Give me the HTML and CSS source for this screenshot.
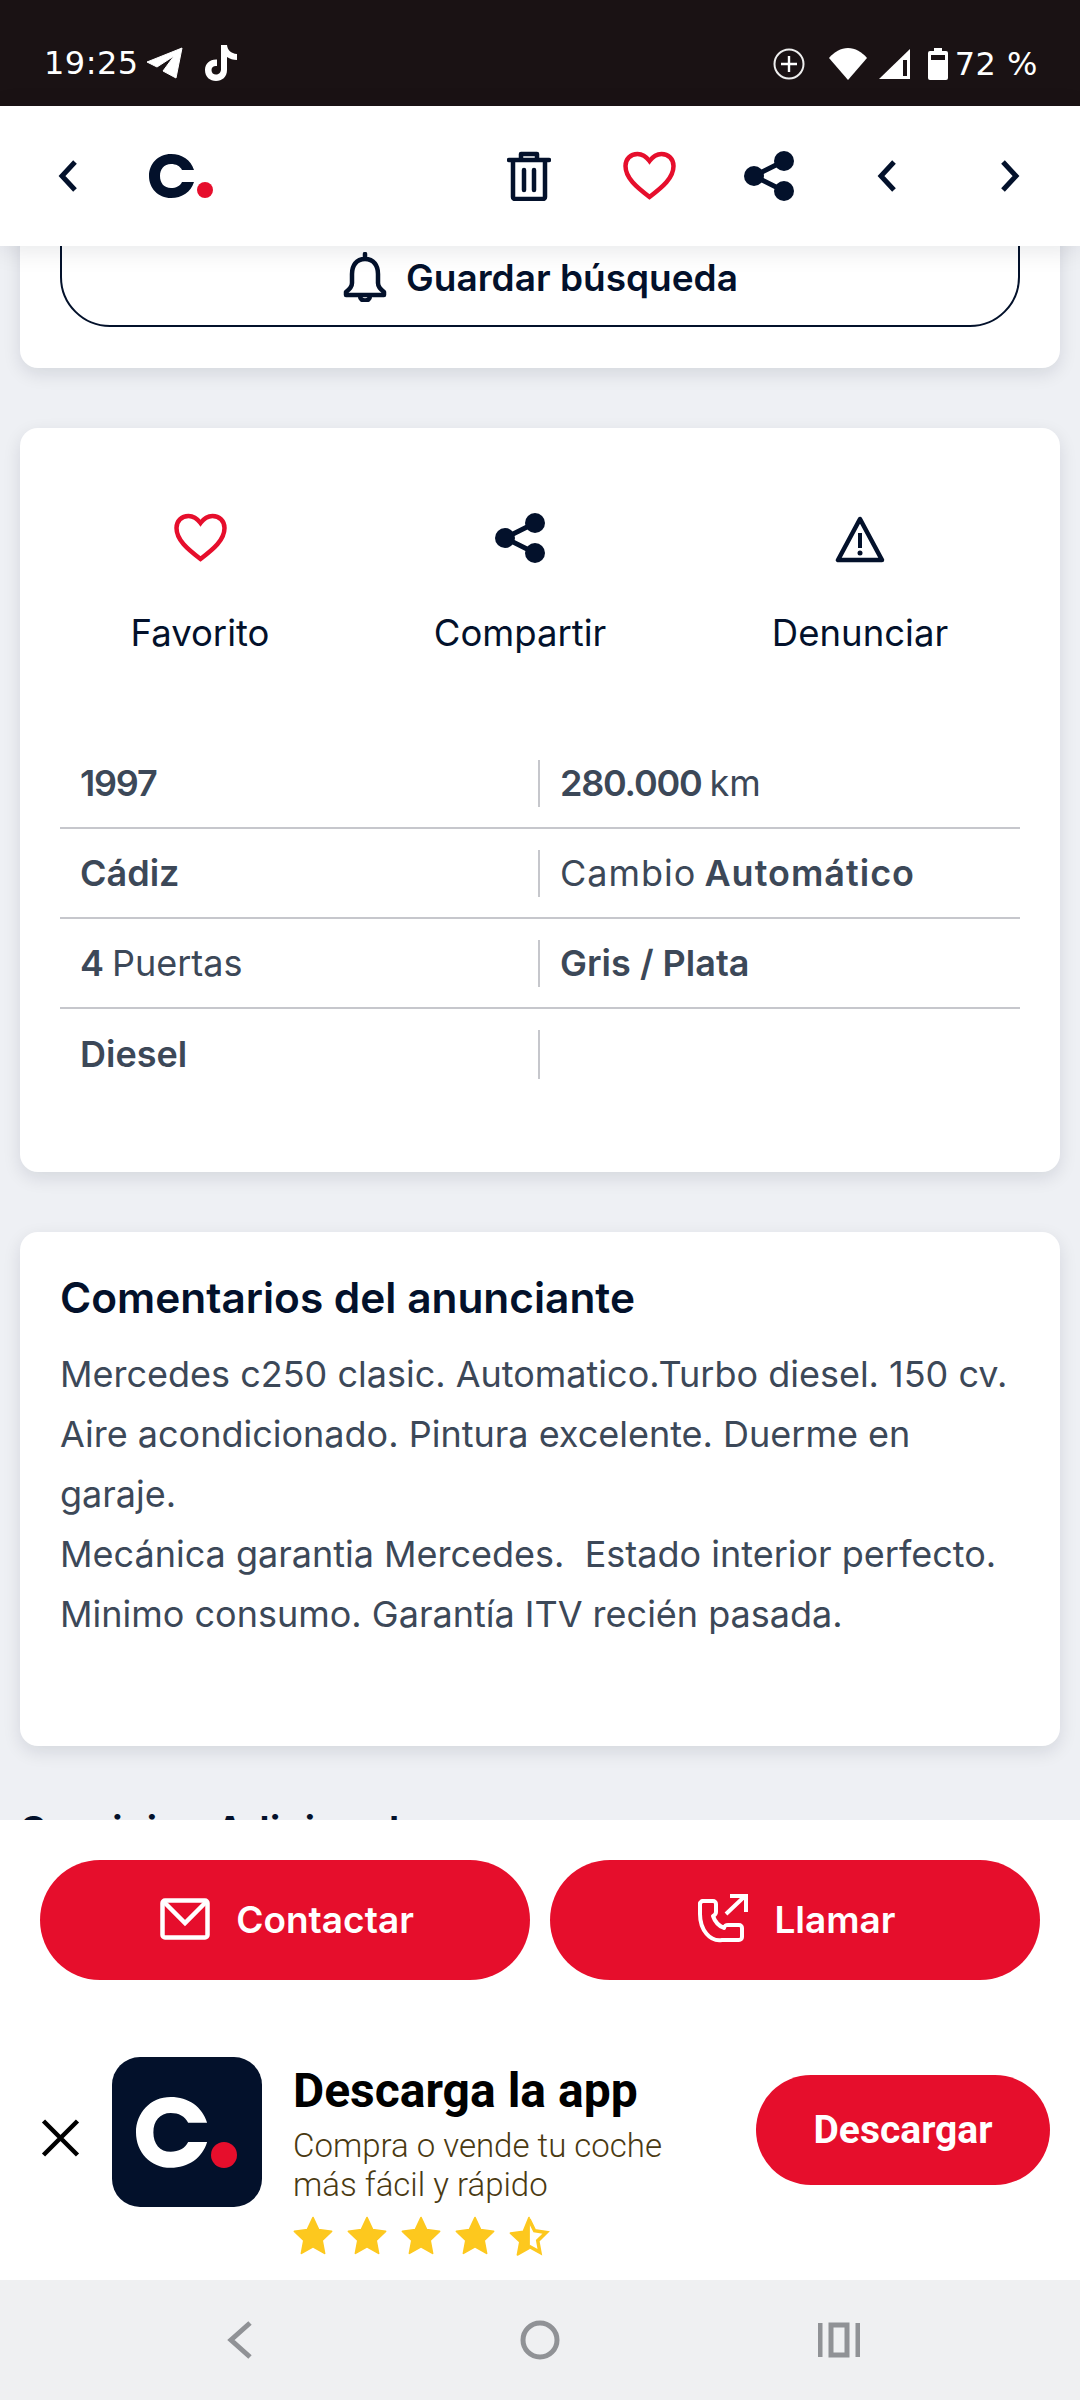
FILE: index.html
```html
<!DOCTYPE html>
<html lang="es">
<head>
  <meta charset="UTF-8">
  <title>Anuncio</title>
  <link rel="stylesheet" href="styles.css">
</head>
<body>
  <div class="statusbar">
    <div class="status-left">
      <span class="status-text">19:25</span>
      <svg class="ic-telegram" viewBox="0 0 36 32"><path d="M0 15 35 1 29 31 16 24 27 9 10 20Z" fill="#fff" stroke="#fff" stroke-linejoin="round" stroke-width="1"/></svg>
      <svg class="ic-tiktok" viewBox="0 0 34 38"><path d="M17 1h6c.5 5 4 8.500 10 9v6c-4 0-7-1-10-3v13c0 7-5 11-11 11S1 33 1 26c0-6.500 5-11 12-10.500v6.500c-3-.5-5.500 1-5.500 4s2 4.500 4.500 4.500 5-2 5-5Z" fill="#fff"/></svg>
    </div>
    <div class="status-right">
      <svg class="ic-data" viewBox="0 0 32 32"><circle cx="16" cy="16" r="14.500" fill="none" stroke="#eee" stroke-width="2"/><path d="M16 8v16M8 16h16" stroke="#fff" stroke-width="2.400"/></svg>
      <svg class="ic-wifi" viewBox="0 0 38 32"><path d="M0 10C5 4 12 0 19 0s14 4 19 10L19 32Z" fill="#fff"/></svg>
      <svg class="ic-signal" viewBox="0 0 32 32"><path d="M0 31 31 1v30Z" fill="#fff"/><path d="M24 12v16h4V12Z" fill="#1a1214"/></svg>
      <svg class="ic-battery" viewBox="0 0 20 32"><path d="M6 0h8v3h4a2 2 0 0 1 2 2v25a2 2 0 0 1-2 2H2a2 2 0 0 1-2-2V5a2 2 0 0 1 2-2h4Z" fill="#fff"/><path d="M3 7h14v5H3Z" fill="#1a1214"/></svg>
      <span class="status-text">72 %</span>
    </div>
  </div>

  <header class="topbar">
    <svg class="ic-chev" viewBox="0 0 20 34"><path d="M17 3 4 17l13 14" /></svg>
    <svg class="logo" viewBox="0 0 65 44"><path d="M45 16C42 6 33 0 22 0 9 0 0 10 0 22s9 22 22 22c11 0 20-6 23-16H33c-2 4-6 6-11 6-7 0-11-5-11-12s4-12 11-12c5 0 9 2 11 6Z" fill="#03112b"/><circle cx="56" cy="36" r="8" fill="#e60e2c"/></svg>
    <div class="topbar-actions">
      <svg class="ic-trash" viewBox="0 0 44 50"><path d="M14 8V3h16v5M2 9h40M6 10v36a2 2 0 0 0 2 2h28a2 2 0 0 0 2-2V10M17 19v20M27 19v20" fill="none" stroke="#03112b" stroke-width="4.500" stroke-linejoin="round" stroke-linecap="round"/></svg>
      <svg class="ic-heart-big" viewBox="0 0 54 50"><path d="M27 46C14 36 3 27 3 15 3 8 8 3 15 3c5 0 9 3 12 7 3-4 7-7 12-7 7 0 12 5 12 12 0 12-11 21-24 31Z" fill="none" stroke="#e60e2c" stroke-width="4.500"/></svg>
      <svg class="ic-share-big" viewBox="0 0 50 50"><path d="M10 25 40 10M10 25l30 15" stroke="#03112b" stroke-width="5"/><circle cx="10" cy="25" r="10" fill="#03112b"/><circle cx="40" cy="10" r="10" fill="#03112b"/><circle cx="40" cy="40" r="10" fill="#03112b"/></svg>
      <svg class="ic-chev" viewBox="0 0 20 34"><path d="M17 3 4 17l13 14" /></svg>
      <svg class="ic-chev" viewBox="0 0 20 34"><path d="M3 3l13 14L3 31" /></svg>
    </div>
  </header>

  <main class="content">
    <section class="card card-search">
      <button class="btn-outline">
        <svg class="ic-bell" viewBox="0 0 46 50"><path d="M23 2v5M23 7c-9 0-13 7-13 15v9c0 4-2 6-6 9v3h38v-3c-4-3-6-5-6-9v-9c0-8-4-15-13-15ZM18 44c0 6 10 6 10 0" fill="none" stroke="#03112b" stroke-width="4.500" stroke-linejoin="round" stroke-linecap="round"/></svg>
        Guardar búsqueda
      </button>
    </section>

    <section class="card card-detail">
      <div class="actions">
        <div class="action">
          <svg class="ic-action-heart" viewBox="0 0 54 50"><path d="M27 46C14 36 3 27 3 15 3 8 8 3 15 3c5 0 9 3 12 7 3-4 7-7 12-7 7 0 12 5 12 12 0 12-11 21-24 31Z" fill="none" stroke="#e60e2c" stroke-width="4.500"/></svg>
          <span>Favorito</span>
        </div>
        <div class="action">
          <svg class="ic-action-share" viewBox="0 0 50 50"><path d="M10 25 40 10M10 25l30 15" stroke="#03112b" stroke-width="5"/><circle cx="10" cy="25" r="10" fill="#03112b"/><circle cx="40" cy="10" r="10" fill="#03112b"/><circle cx="40" cy="40" r="10" fill="#03112b"/></svg>
          <span>Compartir</span>
        </div>
        <div class="action">
          <svg class="ic-action-warn" viewBox="0 0 50 47"><path d="M25 3 3 44h44Z" fill="none" stroke="#03112b" stroke-width="4.500" stroke-linejoin="round"/><path d="M25 17v15" stroke="#03112b" stroke-width="4"/><circle cx="25" cy="37" r="2.500" fill="#03112b"/></svg>
          <span>Denunciar</span>
        </div>
      </div>

      <div class="specs">
        <div class="spec"><b class="num">1997</b></div>
        <div class="spec"><b class="num">280.000</b> km</div>
        <div class="spec"><b>Cádiz</b></div>
        <div class="spec spec-wide">Cambio <b>Automático</b></div>
        <div class="spec"><b>4</b> Puertas</div>
        <div class="spec"><b>Gris / Plata</b></div>
        <div class="spec"><b>Diesel</b></div>
        <div class="spec"></div>
      </div>
    </section>

    <section class="card card-comments">
      <h2>Comentarios del anunciante</h2>
      <p>Mercedes c250 clasic. Automatico.Turbo diesel. 150 cv.<br>Aire acondicionado. Pintura excelente. Duerme en<br>garaje.<br>Mecánica garantia Mercedes.&nbsp; Estado interior perfecto.<br>Minimo consumo. Garantía ITV recién pasada.</p>
    </section>

    <h2 class="section-next">Servicios Adicionales</h2>
  </main>

  <footer class="bottom">
    <div class="cta">
      <a class="btn-red">
        <svg class="ic-mail" viewBox="0 0 50 42"><rect x="2.500" y="2.500" width="45" height="37" rx="2.500" fill="none" stroke="#fff" stroke-width="4.500"/><path d="M4 4l21 21L46 4" fill="none" stroke="#fff" stroke-width="4.500"/></svg>
        Contactar
      </a>
      <a class="btn-red">
        <svg class="ic-call" viewBox="0 0 50 50"><path d="M4 7h11a3 3 0 0 1 3 3v8c0 2-1 3-3 4 2 6 6 10 11 12 1-3 2-3 4-3h11a3 3 0 0 1 3 3v9a3 3 0 0 1-3 3H24C12 48 2 36 2 20V9Z" fill="none" stroke="#fff" stroke-width="4" stroke-linejoin="round"/><path d="M28 20 47 2M32 2h16v16" fill="none" stroke="#fff" stroke-width="4"/></svg>
        Llamar
      </a>
    </div>
    <div class="app-banner">
      <svg class="ic-close" viewBox="0 0 38 38"><path d="M2 2l34 34M36 2 2 36" stroke="#000" stroke-width="4.500"/></svg>
      <div class="app-icon">
        <svg viewBox="0 0 150 150"><path transform="translate(24 40) scale(1.580 1.610)" d="M45 16C42 6 33 0 22 0 9 0 0 10 0 22s9 22 22 22c11 0 20-6 23-16H33c-2 4-6 6-11 6-7 0-11-5-11-12s4-12 11-12c5 0 9 2 11 6Z" fill="#fff"/><circle cx="112" cy="98" r="13" fill="#e60e2c"/></svg>
      </div>
      <div class="app-text">
        <h3>Descarga la app</h3>
        <p>Compra o vende tu coche<br>más fácil y rápido</p>
        <div class="stars">
          <svg viewBox="0 0 24 24"><path class="star" d="M12 1.500l3.200 6.900 7.400 1-5.400 5.100 1.400 7.400-6.600-3.700-6.600 3.700 1.400-7.400-5.400-5.100 7.400-1Z"/></svg>
          <svg viewBox="0 0 24 24"><path class="star" d="M12 1.500l3.200 6.900 7.400 1-5.400 5.100 1.400 7.400-6.600-3.700-6.600 3.700 1.400-7.400-5.400-5.100 7.400-1Z"/></svg>
          <svg viewBox="0 0 24 24"><path class="star" d="M12 1.500l3.200 6.900 7.400 1-5.400 5.100 1.400 7.400-6.600-3.700-6.600 3.700 1.400-7.400-5.400-5.100 7.400-1Z"/></svg>
          <svg viewBox="0 0 24 24"><path class="star" d="M12 1.500l3.200 6.900 7.400 1-5.400 5.100 1.400 7.400-6.600-3.700-6.600 3.700 1.400-7.400-5.400-5.100 7.400-1Z"/></svg>
          <svg viewBox="0 0 24 24"><path class="star" d="M12 1.500v17.600l-6.600 3.700 1.400-7.400-5.400-5.100 7.400-1Z"/><path class="star-line" d="M12 2.500l3.200 6.500 6.600 1-4.800 4.700 1.200 6.600-6.200-3.400"/></svg>
        </div>
      </div>
      <a class="btn-red btn-download">Descargar</a>
    </div>
  </footer>

  <nav class="navbar">
    <svg class="nav-back" viewBox="0 0 28 40"><path d="M24 3 5 20l19 17"/></svg>
    <svg class="nav-home" viewBox="0 0 40 40"><circle cx="20" cy="20" r="17"/></svg>
    <svg class="nav-recent" viewBox="0 0 42 36"><path d="M2 1v34M40 1v34M13 3h16v30H13Z"/></svg>
  </nav>
</body>
</html>
```

FILE: styles.css
```css
* {
  box-sizing: border-box;
}
body {
  margin: 0;
  width: 1080px;
  height: 2400px;
  overflow: hidden;
  display: flex;
  flex-direction: column;
  background: #eef0f4;
  font-family: "Inter", "Noto Sans", sans-serif;
  color: #03112b;
}
svg {
  display: block;
  flex-shrink: 0;
}

/* status bar */
.statusbar {
  height: 106px;
  flex-shrink: 0;
  background: #1a1214;
  color: #fff;
  display: flex;
  justify-content: space-between;
  align-items: flex-end;
  padding: 0 42px 24px 44px;
}
.status-left, .status-right {
  display: flex;
  align-items: center;
}
.status-text {
  font-family: "DejaVu Sans", sans-serif;
  font-size: 32px;
  letter-spacing: 0.5px;
  line-height: 36px;
}
.ic-telegram { width: 36px; height: 32px; margin-left: 8px; }
.ic-tiktok { width: 34px; height: 38px; margin-left: 21px; }
.ic-data { width: 32px; height: 32px; }
.ic-wifi { width: 38px; height: 32px; margin-left: 24px; }
.ic-signal { width: 32px; height: 32px; margin-left: 12px; }
.ic-battery { width: 20px; height: 32px; margin-left: 17px; margin-right: 7px; }

/* top bar */
.topbar {
  height: 140px;
  flex-shrink: 0;
  background: #fff;
  display: flex;
  align-items: center;
  padding: 0 60px 0 58px;
  position: relative;
  z-index: 2;
  box-shadow: 0 4px 24px rgba(3, 17, 43, 0.1);
}
.ic-chev {
  width: 20px;
  height: 34px;
  fill: none;
  stroke: #03112b;
  stroke-width: 5;
}
.logo {
  width: 65px;
  height: 44px;
  margin-left: 71px;
}
.topbar-actions {
  margin-left: auto;
  display: flex;
  align-items: center;
}
.ic-trash { width: 44px; height: 50px; margin-right: 71px; }
.ic-heart-big { width: 55px; height: 50px; margin-right: 67px; }
.ic-share-big { width: 50px; height: 50px; margin-right: 83px; }
.topbar-actions .ic-chev + .ic-chev { margin-left: 103px; }

/* cards */
.content {
  flex: 1;
  overflow: hidden;
  padding: 0 20px;
}
.card {
  background: #fff;
  border-radius: 18px;
  box-shadow: 0 6px 18px rgba(3, 17, 43, 0.11);
  margin-bottom: 60px;
}
.card-search {
  margin-top: -59px;
  padding: 0 40px 41px;
}
.btn-outline {
  width: 100%;
  height: 140px;
  padding: 40px 0 0;
  border: 2px solid #03112b;
  border-radius: 50px;
  background: #fff;
  display: flex;
  align-items: center;
  justify-content: center;
  gap: 18px;
  font-family: inherit;
  font-size: 37px;
  font-weight: 600;
  color: #03112b;
}
.ic-bell { width: 46px; height: 50px; }

.card-detail {
  height: 744px;
  padding: 85px 40px 0;
}
.actions {
  display: flex;
  height: 142px;
}
.action {
  width: 240px;
  display: flex;
  flex-direction: column;
  align-items: center;
  font-size: 36.5px;
  line-height: 44px;
}
.action span {
  margin-top: 48px;
}
.action:nth-child(1) { margin-left: 20px; }
.action:nth-child(2) { margin-left: 80px; }
.action:nth-child(3) { margin-left: 100px; }
.ic-action-heart { width: 57px; height: 50px; }
.ic-action-share { width: 50px; height: 50px; }
.ic-action-warn { width: 50px; height: 47px; margin-top: 3px; }

.specs {
  display: grid;
  grid-template-columns: 478px 1fr;
  margin-top: 84px;
}
.spec {
  height: 90px;
  display: flex;
  align-items: center;
  gap: 8px;
  padding-left: 20px;
  font-size: 36px;
  color: #3c4858;
  border-bottom: 2px solid #c6c7cc;
  position: relative;
}
.spec b {
  font-weight: 600;
}
.spec b.num {
  letter-spacing: -1.2px;
}
.spec-wide {
  letter-spacing: 1px;
}
.spec:nth-child(even) {
  padding-left: 22px;
}
.spec:nth-child(even)::before {
  content: "";
  position: absolute;
  left: 0;
  top: 21px;
  bottom: 20px;
  width: 2px;
  background: #c6c7cc;
}
.spec:nth-last-child(-n+2) {
  border-bottom: none;
}

.card-comments {
  height: 514px;
  padding: 41px 40px 0;
}
.card-comments h2 {
  margin: 0;
  font-size: 42.4px;
  font-weight: 600;
  line-height: 50px;
}
.card-comments p {
  margin: 21px 0 0;
  font-size: 36px;
  line-height: 60px;
  color: #3c4858;
}
.section-next {
  margin: 0;
  font-size: 41px;
  font-weight: 600;
}

/* bottom */
.bottom {
  height: 460px;
  flex-shrink: 0;
  background: #fff;
  position: relative;
  z-index: 2;
}
.cta {
  display: flex;
  gap: 20px;
  padding: 40px 40px 0;
}
.btn-red {
  flex: 1;
  height: 120px;
  border-radius: 60px;
  background: #e60e2c;
  color: #fff;
  display: flex;
  align-items: center;
  justify-content: center;
  gap: 26px;
  font-family: "Inter", sans-serif;
  font-size: 37px;
  font-weight: 600;
}
.cta .btn-red {
  padding: 0 0 2px 4px;
}
.ic-mail { width: 50px; height: 42px; }
.ic-call { width: 50px; height: 50px; }
.app-banner {
  display: flex;
  align-items: flex-start;
  padding: 77px 30px 0 41px;
}
.ic-close {
  width: 39px;
  height: 38px;
  margin-top: 62px;
}
.app-icon {
  width: 150px;
  height: 150px;
  border-radius: 28px;
  background: #03112b;
  margin-left: 32px;
}
.app-text {
  margin-left: 31px;
  font-family: "Roboto", sans-serif;
}
.app-text h3 {
  margin: 7px 0 0;
  font-size: 48px;
  font-weight: 700;
  line-height: 54px;
  color: #000;
}
.app-text p {
  margin: 8px 0 0;
  font-size: 33px;
  font-weight: 300;
  line-height: 39px;
  color: #4a3a12;
}
.stars {
  display: flex;
  gap: 12px;
  margin: 11px 0 0 -1px;
}
.stars svg {
  width: 42px;
  height: 42px;
}
.star {
  fill: #fdc81e;
  stroke: #fdc81e;
  stroke-width: 1;
  stroke-linejoin: round;
}
.star-line {
  fill: none;
  stroke: #fdc81e;
  stroke-width: 2;
}
.btn-download {
  flex: none;
  width: 294px;
  height: 110px;
  margin-left: auto;
  margin-top: 18px;
  font-family: "Roboto", sans-serif;
  font-size: 39px;
  font-weight: 700;
}

/* android nav */
.navbar {
  height: 120px;
  flex-shrink: 0;
  background: #eff0f2;
  display: flex;
  align-items: center;
  padding-left: 226px;
}
.nav-back, .nav-home, .nav-recent {
  fill: none;
  stroke: #909296;
  stroke-width: 5;
}
.nav-back { width: 28px; height: 40px; }
.nav-home { width: 40px; height: 40px; margin-left: 266px; }
.nav-recent { width: 42px; height: 36px; margin-left: 258px; }
```
